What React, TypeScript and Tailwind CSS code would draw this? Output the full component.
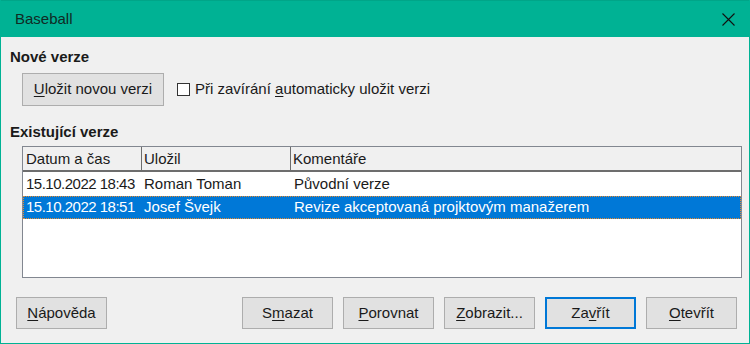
import React from "react"

const rows = [
  { date: "15.10.2022 18:43", who: "Roman Toman", note: "Původní verze", selected: false },
  { date: "15.10.2022 18:51", who: "Josef Švejk", note: "Revize akceptovaná projktovým manažerem", selected: true },
]

function Btn({ children, focused = false, className = "" }: { children: React.ReactNode; focused?: boolean; className?: string }) {
  return (
    <button
      className={`h-[32px] w-[91px] bg-[#e1e1e1] text-[15px] text-[#1a1a1a] ${
        focused ? "border-2 border-[#0078d7]" : "border border-[#adadad]"
      } ${className}`}
    >
      {children}
    </button>
  )
}

export default function App() {
  return (
    <div
      className="w-[750px] h-[344px] flex flex-col bg-[#f0f0f0] border-x border-b border-[#00b294] text-[#1a1a1a]"
      style={{ fontFamily: '"Liberation Sans", Arial, sans-serif' }}
    >
      {/* title bar */}
      <div className="h-[37px] shrink-0 bg-[#00b294] border-t border-[#00a588] flex items-center justify-between pl-[14px] pr-[14px]">
        <span className="text-[15px] text-[#102a24]">Baseball</span>
        <svg width="13" height="13" viewBox="0 0 13 13">
          <path d="M0.5 0.5 L12.5 12.5 M12.5 0.5 L0.5 12.5" stroke="#111" strokeWidth="1.1" />
        </svg>
      </div>

      <div className="flex flex-col flex-1 pl-[9px] pr-[8px]">
        <div className="pt-[10px] text-[15px] font-bold leading-[20px]">Nové verze</div>

        <div className="flex items-center mt-[6px] pl-[12px]">
          <button className="h-[33px] w-[142px] bg-[#e1e1e1] border border-[#adadad] text-[15px]">
            <span className="underline underline-offset-2">U</span>ložit novou verzi
          </button>
          <label className="flex items-center ml-[13px] text-[15px] whitespace-nowrap">
            <span className="w-[13px] h-[13px] bg-white border border-[#333] mr-[5px]" />
            Při zavírání&nbsp;<span className="underline underline-offset-2">a</span>utomaticky uložit verzi
          </label>
        </div>

        <div className="mt-[16px] text-[15px] font-bold leading-[20px]">Existující verze</div>

        <div className="mt-[4px] ml-[12px] w-[720px] h-[132px] bg-white border border-[#828790] text-[15px] flex flex-col">
          <div className="h-[25px] bg-[#f0f0f0] border-b-2 border-[#6d6d6d] flex shrink-0">
            <div className="w-[119px] border-r border-[#6d6d6d] pl-[3px] leading-[24px]">Datum a čas</div>
            <div className="w-[149px] border-r border-[#6d6d6d] pl-[2px] leading-[24px]">Uložil</div>
            <div className="flex-1 pl-[2px] leading-[24px]">Komentáře</div>
          </div>
          <div className="h-[1px]" />
          {rows.map((r) => (
            <div
              key={r.date}
              className={`flex h-[23px] items-center whitespace-nowrap ${
                r.selected ? "bg-[#0078d7] text-white outline-1 outline-dotted outline-[#e88a2e] -outline-offset-1" : ""
              }`}
            >
              <div className="w-[119px] pl-[3px] tracking-[-0.5px]">{r.date}</div>
              <div className="w-[149px] pl-[2px]">{r.who}</div>
              <div className="flex-1 pl-[3px]">{r.note}</div>
            </div>
          ))}
        </div>

        <div className="flex items-center mt-[19px] pl-[6px] pr-[4px]">
          <Btn>
            <span className="underline underline-offset-2">N</span>ápověda
          </Btn>
          <div className="flex-1" />
          <div className="flex gap-[10px]">
            <Btn>
              S<span className="underline underline-offset-2">m</span>azat
            </Btn>
            <Btn>
              <span className="underline underline-offset-2">P</span>orovnat
            </Btn>
            <Btn>
              <span className="underline underline-offset-2">Z</span>obrazit...
            </Btn>
            <Btn focused>
              Za<span className="underline underline-offset-2">v</span>řít
            </Btn>
            <Btn>
              <span className="underline underline-offset-2">O</span>tevřít
            </Btn>
          </div>
        </div>
      </div>
    </div>
  )
}
